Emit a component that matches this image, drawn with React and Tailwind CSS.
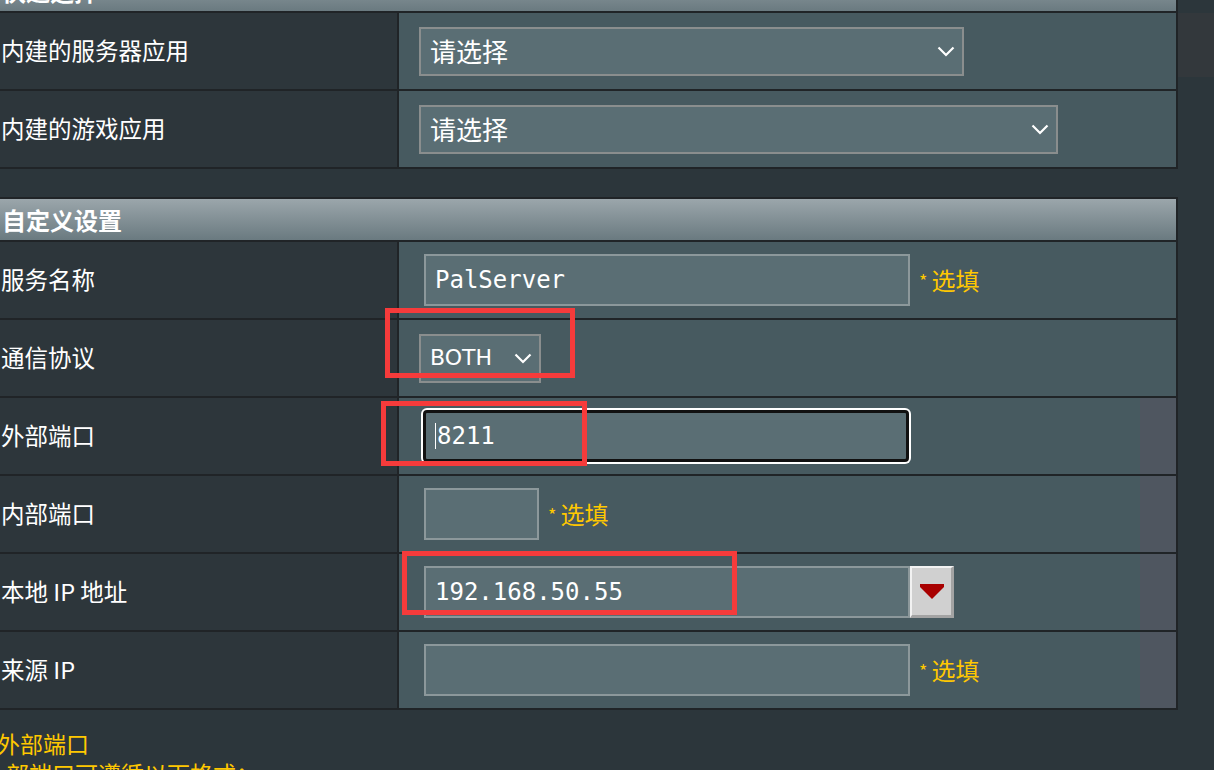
import React from 'react'

const cjk = "font-['Noto_Sans_CJK_SC','Noto_Sans',sans-serif]"
const mono = "font-['DejaVu_Sans_Mono','Liberation_Mono',monospace]"

function Chevron({ className = '' }) {
  return (
    <svg width="18" height="11" viewBox="0 0 18 11" className={className}>
      <polyline points="1.5,1.5 9,9 16.5,1.5" fill="none" stroke="#fff"
        strokeWidth="2.2" />
    </svg>
  )
}

function Header({ title, className = '' }) {
  return (
    <div className={`flex h-[41px] items-center bg-[linear-gradient(#9ba6ab,#6a7a80)]
      pl-[2px] text-[24px] font-bold text-white ${className}`}>{title}</div>
  )
}

function Row({ label, children, strip }) {
  return (
    <div className="grid h-[78px] grid-cols-[399px_1fr] border-t-2 border-[#202427]">
      <div className="flex items-center border-r-2 border-[#202427] bg-[#2d363b]
        pl-px text-[23.5px] text-white">{label}</div>
      <div className={`flex items-center ${strip
        ? 'bg-[linear-gradient(to_right,#475a60_calc(100%-36px),#4f5660_calc(100%-36px))]'
        : 'bg-[#475a60]'}`}>{children}</div>
    </div>
  )
}

function Select({ text, width, small }) {
  return (
    <div className={`ml-[20px] flex h-[49px] items-center justify-between border-2
      border-[#8a8e8e] bg-[#5a6e74] pl-[9px] pr-[7px] text-white
      ${small ? "font-['DejaVu_Sans',sans-serif] text-[22px]" : 'text-[26px]'}`}
      style={{ width }}>
      <span className="leading-none">{text}</span>
      <Chevron />
    </div>
  )
}

function Input({ value = '', width = 486 }) {
  return (
    <div className={`ml-[25px] flex h-[52px] items-center border-2 border-[#8c989b]
      bg-[#5a6e74] pl-[9px] text-[24px] text-white ${mono}`} style={{ width }}>
      {value}
    </div>
  )
}

function Optional() {
  return (
    <span className="ml-[9px] flex items-center gap-[4px] text-[24px] text-[#ffc800]">
      <span className="text-[18px]">*</span>选填
    </span>
  )
}

export default function App() {
  return (
    <div className={`relative h-[770px] w-[1214px] overflow-hidden bg-[#2c363b] ${cjk}`}>
      <div className="flex">
        <div className="w-[1178px] shrink-0">
          <div className="border-r-2 border-b-2 border-[#202427]">
            <Header title="快速选择" className="-mt-[30px]" />
            <Row label="内建的服务器应用">
              <Select text="请选择" width={545} />
            </Row>
            <Row label="内建的游戏应用">
              <Select text="请选择" width={639} />
            </Row>
          </div>

          <div className="mt-[28px] border-t-2 border-r-2 border-b-2 border-[#202427]">
            <Header title="自定义设置" />
            <Row label="服务名称">
              <Input value="PalServer" />
              <Optional />
            </Row>
            <Row label="通信协议">
              <Select text="BOTH" width={122} small />
            </Row>
            <Row label="外部端口" strip>
              <div className={`ml-[24px] flex h-[52px] w-[486px] items-center rounded-[4px]
                border-[3px] border-[#111] bg-[#5a6e74] pl-[9px] text-[24px] text-white
                ring-2 ring-white ${mono}`}>
                <span className="mr-px inline-block h-[26px] w-px bg-white" />8211
              </div>
            </Row>
            <Row label="内部端口" strip>
              <Input width={115} />
              <Optional />
            </Row>
            <Row label="本地 IP 地址" strip>
              <Input value="192.168.50.55" />
              <div className="flex h-[52px] w-[44px] items-center justify-center border-t-2
                border-l-2 border-r-[3px] border-b-[3px] border-t-[#f2f2f2] border-l-[#f2f2f2]
                border-r-[#a3a3a3] border-b-[#a3a3a3] bg-[#d0d0d0]">
                <svg width="24" height="15" viewBox="0 0 24 15">
                  <polygon points="0,0 24,0 24,3 12,15 0,3" fill="#a80000" />
                </svg>
              </div>
            </Row>
            <Row label="来源 IP" strip>
              <Input />
              <Optional />
            </Row>
          </div>

          <div className="mt-[18px] text-[23px] leading-[30px] text-[#ffc800]">
            <div className="-ml-[3px]">外部端口</div>
            <div className="-ml-[17px] whitespace-nowrap">外部端口可遵循以下格式：</div>
          </div>
        </div>
        <div className="flex-1">
          <div className="mt-[13px] h-[64px] bg-[#33383c]" />
        </div>
      </div>

      {/* red annotation boxes */}
      <div className="absolute left-[385px] top-[308px] h-[70px] w-[190px] border-[5px] border-[#f63b3b]" />
      <div className="absolute left-[381px] top-[401px] h-[65px] w-[206px] border-[5px] border-[#f63b3b]" />
      <div className="absolute left-[402px] top-[551px] h-[64px] w-[335px] border-[5px] border-[#f63b3b]" />
    </div>
  )
}
